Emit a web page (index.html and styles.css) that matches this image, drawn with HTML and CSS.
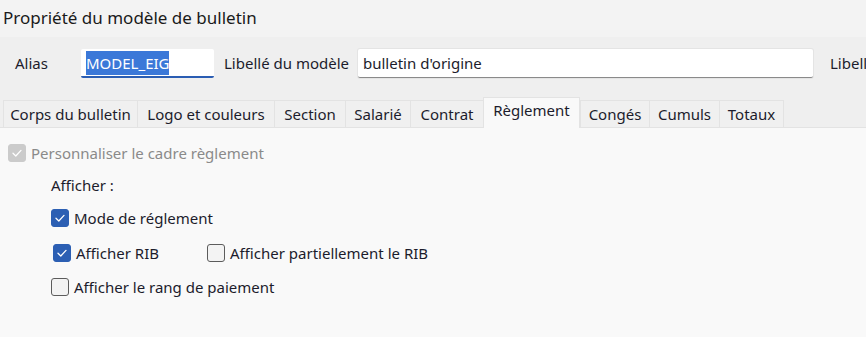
FILE: index.html
```html
<!DOCTYPE html>
<html lang="fr">
<head>
<meta charset="utf-8">
<title>Propriété du modèle de bulletin</title>
<link rel="stylesheet" href="styles.css">
</head>
<body>
<div class="window">
  <div class="titlebar">Propriété du modèle de bulletin</div>
  <div class="header">
    <span class="lbl lbl-alias">Alias</span>
    <div class="field field-alias"><span class="sel">MODEL_EIG</span></div>
    <span class="lbl lbl-libelle">Libellé du modèle</span>
    <div class="field field-libelle">bulletin d'origine</div>
    <span class="lbl lbl-cut">Libellé</span>
  </div>
  <div class="tabs">
    <div class="tab t1">Corps du bulletin</div>
    <div class="tab t2">Logo et couleurs</div>
    <div class="tab t3">Section</div>
    <div class="tab t4">Salarié</div>
    <div class="tab t5">Contrat</div>
    <div class="tab t6 active">Règlement</div>
    <div class="tab t7">Congés</div>
    <div class="tab t8">Cumuls</div>
    <div class="tab t9">Totaux</div>
  </div>
  <div class="content">
    <div class="check disabled row-perso">
      <span class="box on"><svg viewBox="0 0 18 18" width="18" height="18"><path d="M5 9.3 L7.8 12 L13 6.4" fill="none" stroke="#fff" stroke-width="1.3" stroke-linecap="round" stroke-linejoin="round"/></svg></span>
      <span class="txt">Personnaliser le cadre règlement</span>
    </div>
    <div class="group">
      <div class="group-title">Afficher :</div>
      <div class="check row-mode">
        <span class="box on"><svg viewBox="0 0 18 18" width="18" height="18"><path d="M5 9.3 L7.8 12 L13 6.4" fill="none" stroke="#fff" stroke-width="1.3" stroke-linecap="round" stroke-linejoin="round"/></svg></span>
        <span class="txt">Mode de réglement</span>
      </div>
      <div class="row-rib">
        <div class="check">
          <span class="box on"><svg viewBox="0 0 18 18" width="18" height="18"><path d="M5 9.3 L7.8 12 L13 6.4" fill="none" stroke="#fff" stroke-width="1.3" stroke-linecap="round" stroke-linejoin="round"/></svg></span>
          <span class="txt">Afficher RIB</span>
        </div>
        <div class="check">
          <span class="box"></span>
          <span class="txt">Afficher partiellement le RIB</span>
        </div>
      </div>
      <div class="check row-rang">
        <span class="box"></span>
        <span class="txt">Afficher le rang de paiement</span>
      </div>
    </div>
  </div>
</div>
</body>
</html>
```

FILE: styles.css
```css
html, body {
  margin: 0;
  padding: 0;
}
body {
  width: 866px;
  height: 337px;
  overflow: hidden;
  font-family: "Noto Sans", "Liberation Sans", sans-serif;
  font-size: 15px;
  color: #1c1c2c;
  background: #f9f9f9;
}
.window {
  display: flex;
  flex-direction: column;
  height: 337px;
}
.titlebar {
  height: 37px;
  box-sizing: border-box;
  padding: 6px 0 0 3px;
  background: #f3f3f3;
  font-size: 17px;
  color: #1a1a1a;
}
.header {
  background: #efefef;
  height: 60px;
  display: flex;
  align-items: flex-start;
  padding-top: 12px;
  box-sizing: border-box;
  white-space: nowrap;
  overflow: hidden;
}
.header > * { flex: none; }
.lbl {
  line-height: 29px;
}
.lbl-alias { margin-left: 15px; width: 66px; }
.lbl-libelle { margin-left: 10px; width: 134px; }
.lbl-cut { margin-left: 17px; }
.field {
  height: 29px;
  box-sizing: border-box;
  background: #fff;
  line-height: 28px;
  padding-left: 5px;
  border-bottom: 1px solid #8a8a8a;
  border-radius: 2px;
}
.field-alias {
  width: 133px;
  border-bottom: 2px solid #2a5db3;
}
.field-libelle {
  width: 455px;
  box-shadow: 0 0 0 1px #e4e4e4;
}
.sel {
  background: #3b78d8;
  color: #fff;
  padding: 2px 0;
}
.tabs {
  background: #efefef;
  display: flex;
  align-items: flex-end;
  height: 31px;
  padding-left: 3px;
  box-sizing: border-box;
  border-bottom: 1px solid #e3e3e3;
}
.tab {
  flex: none;
  height: 27px;
  box-sizing: border-box;
  line-height: 27px;
  text-align: center;
  background: #f0f0f0;
  border: 1px solid #e3e3e3;
  border-bottom: none;
  border-right: none;
  white-space: nowrap;
}
.t1 { width: 134px; }
.t2 { width: 137px; }
.t3 { width: 71px; }
.t4 { width: 65px; }
.t5 { width: 73px; }
.t6 { width: 97px; }
.t7 { width: 69px; }
.t8 { width: 70px; }
.t9 { width: 65px; border-right: 1px solid #e3e3e3; }
.tab.active {
  height: 31px;
  line-height: 25px;
  background: #f9f9f9;
  margin-bottom: -1px;
  border-right: 1px solid #e3e3e3;
}
.content {
  flex: 1;
  background: #f9f9f9;
  padding: 15px 0 0 8px;
}
.check {
  display: flex;
  align-items: center;
  height: 19px;
  white-space: nowrap;
}
.box {
  width: 18px;
  height: 18px;
  box-sizing: border-box;
  border: 1px solid #5c5c5c;
  border-radius: 3px;
  background: #f3f3f3;
  margin-right: 5px;
  flex: none;
  display: flex;
}
.box.on {
  background: #2c5fb3;
  border-color: #2c5fb3;
}
.box.on svg { margin: -1px; }
.disabled .box.on {
  background: #cbcbcb;
  border-color: #cbcbcb;
}
.disabled .txt { color: #8a8a8a; }
.group {
  padding-left: 43px;
  padding-top: 14px;
}
.group-title {
  line-height: 19px;
}
.row-mode { margin-top: 13px; }
.row-rib {
  display: flex;
  margin-top: 16px;
  padding-left: 2px;
}
.row-rib .check:first-child { width: 154px; }
.row-rang { margin-top: 15px; }
```
